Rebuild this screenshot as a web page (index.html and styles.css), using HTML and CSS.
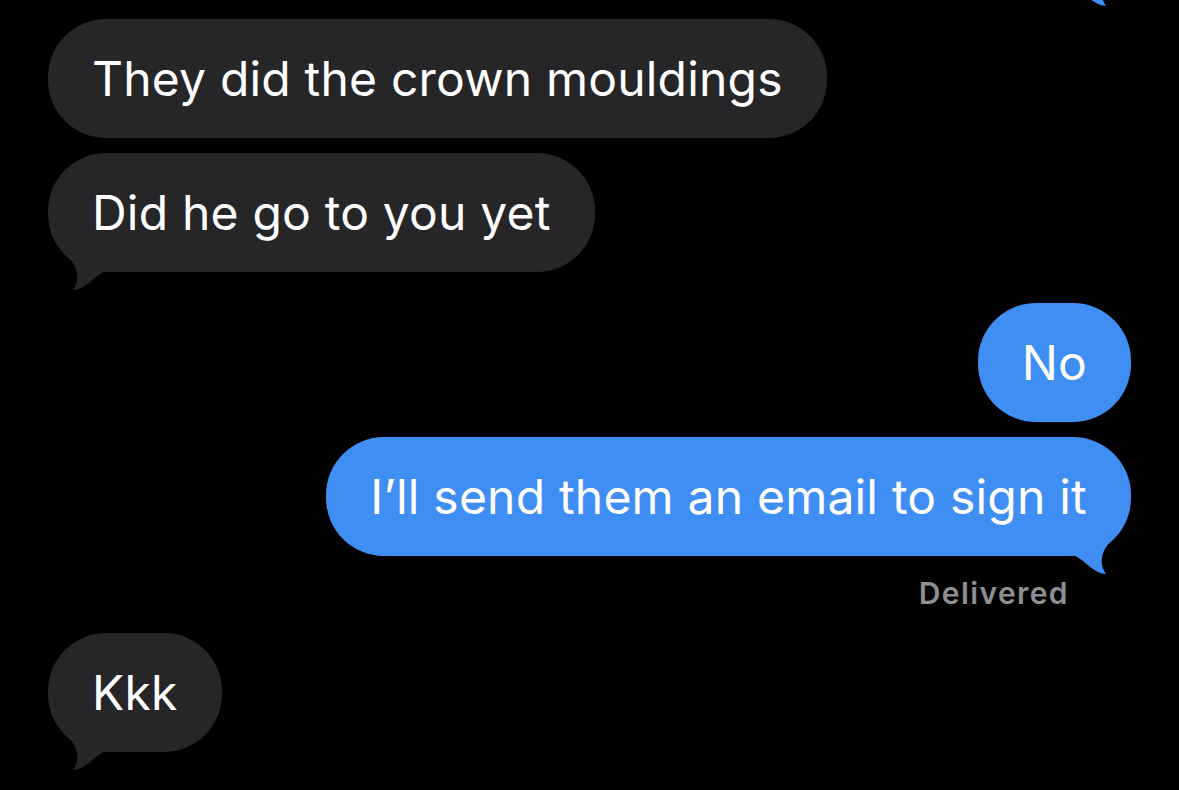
FILE: index.html
```html
<!DOCTYPE html>
<html>
  <head>
    <title>Messages</title>
    <link rel="stylesheet" href="styles.css">
  </head>
  <body>
    <div class="thread">
      <div class="row sent cut">
        <div class="bubble tail blank">
          <svg class="tip" viewBox="0 0 80 70" width="80" height="70"><path d="M1 0H80V48H64C56 48 50 53 42 60C36 65 30 68 25 68C29 62 30 56 29 52C28 44 24 40 20 34C10 22 2 12 1 0Z"/></svg>
        </div>
      </div>

      <div class="row received">
        <div class="bubble"><span class="text">They did the crown mouldings</span></div>
      </div>
      <div class="row received close">
        <div class="bubble tail">
          <svg class="tip" viewBox="0 0 80 70" width="80" height="70"><path d="M1 0H80V48H64C56 48 50 53 42 60C36 65 30 68 25 68C29 62 30 56 29 52C28 44 24 40 20 34C10 22 2 12 1 0Z"/></svg>
          <span class="text">Did he go to you yet</span>
        </div>
      </div>

      <div class="row sent">
        <div class="bubble"><span class="text">No</span></div>
      </div>
      <div class="row sent close">
        <div class="bubble tail">
          <svg class="tip" viewBox="0 0 80 70" width="80" height="70"><path d="M1 0H80V48H64C56 48 50 53 42 60C36 65 30 68 25 68C29 62 30 56 29 52C28 44 24 40 20 34C10 22 2 12 1 0Z"/></svg>
          <span class="text">I’ll send them an email to sign it</span>
        </div>
      </div>
      <div class="status">Delivered</div>

      <div class="row received">
        <div class="bubble tail">
          <svg class="tip" viewBox="0 0 80 70" width="80" height="70"><path d="M1 0H80V48H64C56 48 50 53 42 60C36 65 30 68 25 68C29 62 30 56 29 52C28 44 24 40 20 34C10 22 2 12 1 0Z"/></svg>
          <span class="text">Kkk</span>
        </div>
      </div>
    </div>
  </body>
</html>
```

FILE: styles.css
```css
body {
  margin: 0;
  background-color: #000;
  font-family: Inter, "Liberation Sans", sans-serif;
  overflow: hidden;
  height: 790px;
}

.thread {
  display: flex;
  flex-direction: column;
  padding: 0 48px;
}

.row {
  display: flex;
  margin-top: 31px;
}

.row.close {
  margin-top: 15px;
}

.row.cut {
  margin-top: -131px;
}

.received {
  justify-content: flex-start;
}

.sent {
  justify-content: flex-end;
}

.bubble {
  position: relative;
  font-size: 48px;
  line-height: 56px;
  padding: 32px 44px 31px;
  border-radius: 58px;
  color: #fff;
  letter-spacing: 0.2px;
  white-space: nowrap;
}

.bubble.blank {
  width: 200px;
  height: 56px;
}

.text {
  position: relative;
}

.received .bubble {
  background-color: #262629;
}

.sent .bubble {
  background-color: #3f8ef3;
}

.tip {
  position: absolute;
  bottom: -20px;
  width: 80px;
  height: 70px;
}

.received .tip {
  left: 0;
  fill: #262629;
}

.sent .tip {
  right: 0;
  fill: #3f8ef3;
  transform: scaleX(-1);
}

.status {
  align-self: flex-end;
  margin: 20px 62px 0 0;
  font-size: 30px;
  font-weight: 600;
  letter-spacing: 1.4px;
  color: #8e8e93;
  line-height: 34px;
}

.status + .row {
  margin-top: 23px;
}
```
